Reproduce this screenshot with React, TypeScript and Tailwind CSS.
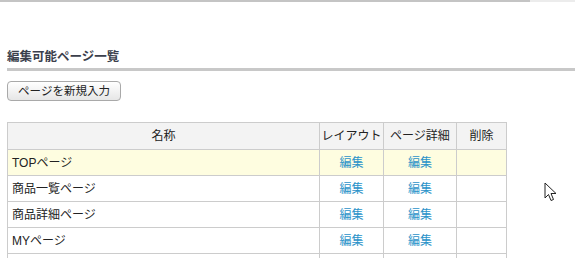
import React from "react";

const rows = [
  { name: "TOPページ", active: true, links: true },
  { name: "商品一覧ページ", links: true },
  { name: "商品詳細ページ", links: true },
  { name: "MYページ", links: true },
  { name: "", links: false },
];

function Cursor() {
  return (
    <svg className="absolute left-[544px] top-[182px]" width="14" height="22" viewBox="0 0 14 22">
      <path
        d="M1 1 L1 16 L4.5 12.5 L7 18.5 L9.5 17.5 L7 11.5 L12 11.5 Z"
        fill="#fff"
        stroke="#222"
        strokeWidth="1"
        strokeLinejoin="miter"
      />
    </svg>
  );
}

export default function App() {
  return (
    <div className="relative h-[258px] w-[575px] overflow-hidden bg-white font-['Liberation_Sans','Noto_Sans_CJK_JP',sans-serif] text-[12px] text-[#222]">
      <div className="flex h-[2px] w-full">
        <div className="h-full w-[530px] bg-[#c4c4c4]" />
        <div className="h-full flex-1 bg-[#ececec]" />
      </div>

      <div className="pl-[7px] pt-[46px]">
        <h2 className="text-[12.5px] font-bold leading-[18px] text-[#3b3f4c]">編集可能ページ一覧</h2>
        <div className="mt-[2px] h-[3px] w-full bg-[#c8c8c8]" />

        <button className="mt-[10px] h-[20px] w-[114px] rounded-[4px] border border-[#a9a9a9] bg-[linear-gradient(#ffffff,#e6e6e6)] text-[11.5px] leading-[18px] text-[#222]">
          ページを新規入力
        </button>

        <table className="mt-[21px] w-[500px] table-fixed border-collapse">
          <colgroup>
            <col className="w-[312px]" />
            <col className="w-[64px]" />
            <col className="w-[73px]" />
            <col className="w-[50px]" />
          </colgroup>
          <thead>
            <tr className="h-[27px] bg-[#f3f3f3]">
              <th className="border border-[#cccccc] font-normal">名称</th>
              <th className="border border-[#cccccc] font-normal">レイアウト</th>
              <th className="border border-[#cccccc] font-normal">ページ詳細</th>
              <th className="border border-[#cccccc] font-normal">削除</th>
            </tr>
          </thead>
          <tbody>
            {rows.map((r, i) => (
              <tr key={i} className={r.active ? "h-[26px] bg-[#fefde0]" : "h-[26px]"}>
                <td className="border border-[#cccccc] pl-[4px]">{r.name}</td>
                <td className="border border-[#cccccc] text-center text-[#2b93c9]">{r.links ? "編集" : ""}</td>
                <td className="border border-[#cccccc] text-center text-[#2b93c9]">{r.links ? "編集" : ""}</td>
                <td className="border border-[#cccccc]" />
              </tr>
            ))}
          </tbody>
        </table>
      </div>

      <Cursor />
    </div>
  );
}
